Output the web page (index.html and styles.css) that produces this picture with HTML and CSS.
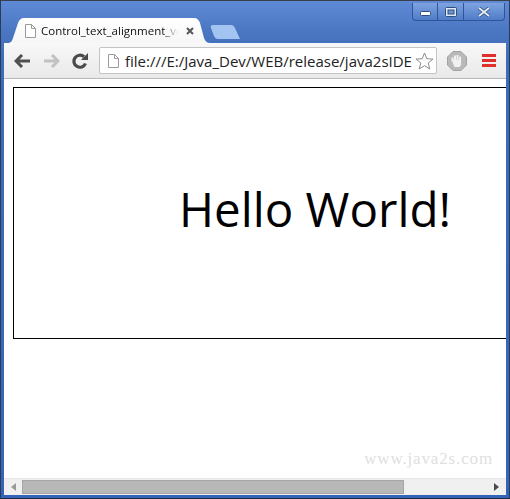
FILE: index.html
```html
<!DOCTYPE html>
<html lang="en">
<head>
    <meta charset="UTF-8">
    <title>Control_text_alignment_vertical</title>
    <link rel="stylesheet" href="styles.css">
</head>
<body>
    <div class="window">
        <div class="title-bar">
            <div class="tab">
                <svg class="page-icon" width="12" height="14" viewBox="0 0 12 14"><path d="M1.5 .5H7.5L11.5 4.5V13.5H1.5Z M7.5 .5V4.5H11.5" fill="#fff" stroke="#9a9a9a"/></svg>
                <span class="tab-title">Control_text_alignment_ve</span>
                <svg class="tab-close" width="8" height="8" viewBox="0 0 8 8"><path d="M1 1L7 7M7 1L1 7" stroke="#555" stroke-width="2"/></svg>
            </div>
            <div class="new-tab"></div>
            <div class="window-buttons">
                <div class="win-btn win-min"><svg width="11" height="5" viewBox="0 0 11 5"><rect x=".5" y=".5" width="10" height="4" rx="1" fill="#fff" stroke="#2f4f80"/></svg></div>
                <div class="win-btn win-max"><svg width="12" height="10" viewBox="0 0 12 10"><rect x=".5" y=".5" width="11" height="9" rx="1" fill="#dfe8f5" stroke="#2f4f80"/><rect x="3" y="3" width="6" height="4" fill="#6f94cf" stroke="#2f4f80"/></svg></div>
                <div class="win-btn win-close"><svg width="14" height="10" viewBox="0 0 14 10"><path d="M2 1L12 9M12 1L2 9" stroke="#2f4f80" stroke-width="3.4"/><path d="M2 1L12 9M12 1L2 9" stroke="#e8eef8" stroke-width="1.8"/></svg></div>
            </div>
        </div>
        <div class="toolbar">
            <svg class="nav-icon" width="17" height="14" viewBox="0 0 17 14"><path d="M8 1L2 7L8 13M2 7H16" fill="none" stroke="#505050" stroke-width="3"/></svg>
            <svg class="nav-icon" width="17" height="14" viewBox="0 0 17 14"><path d="M9 1L15 7L9 13M15 7H1" fill="none" stroke="#c2c2c2" stroke-width="3"/></svg>
            <svg class="nav-icon" width="16" height="16" viewBox="0 0 16 16"><path d="M13.500 10.500A6 6 0 1 1 12 3.800" fill="none" stroke="#4a4a4a" stroke-width="3.200"/><path d="M9 7H16V0Z" fill="#4a4a4a"/></svg>
            <div class="address-bar">
                <svg class="page-icon" width="12" height="14" viewBox="0 0 12 14"><path d="M1.5 .5H7.5L11.5 4.5V13.5H1.5Z M7.5 .5V4.5H11.5" fill="#fff" stroke="#9a9a9a"/></svg>
                <span class="url">file:///E:/Java_Dev/WEB/release/java2sIDE</span>
                <svg class="star" width="19" height="18" viewBox="0 0 19 18"><path d="M9.5 1L11.8 6.7L18 7.1L13.2 11L14.8 17L9.5 13.7L4.2 17L5.8 11L1 7.1L7.2 6.7Z" fill="#fff" stroke="#8c8c8c"/></svg>
            </div>
            <svg class="stop-icon" width="20" height="20" viewBox="0 0 20 20"><path d="M6 .5H14L19.5 6V14L14 19.5H6L.5 14V6Z" fill="#b9b9b9" stroke="#a2a2a2"/><path d="M5.5 10V6.5M8 9V4.5M10.5 9V4M13 9.500V5.500" fill="none" stroke="#f1f1f1" stroke-width="2"/><path d="M4.500 9H14V14L12.500 16H7.500Z" fill="#f1f1f1"/></svg>
            <div class="menu-icon"><span></span><span></span><span></span></div>
        </div>
        <div class="content">
            <div class="page">
                <div class="box">Hello World!</div>
            </div>
            <div class="watermark">www.java2s.com</div>
            <div class="scrollbar">
                <div class="arrow arrow-left"></div>
                <div class="track"><div class="thumb"></div></div>
                <div class="arrow arrow-right"></div>
            </div>
        </div>
    </div>
</body>
</html>
```

FILE: styles.css
```css
html, body {
    margin: 0;
    height: 100%;
    overflow: hidden;
    background-color: #1d2a44;
}

.window {
    box-sizing: border-box;
    width: 510px;
    height: 499px;
    padding: 2px 3px 3px 3px;
    display: flex;
    flex-direction: column;
    background: linear-gradient(to bottom, #5e8ad6 0, #4a76c2 30px, #3f6cb8 60px, #3464b8 100%);
    border-left: 1px solid #2b3a55;
    border-right: 1px solid #2b3a55;
    border-top: 1px solid #3a3f4a;
    border-bottom: 1px solid #1d2a44;
    font-family: "Open Sans", sans-serif;
}

.title-bar {
    height: 40px;
    display: flex;
    align-items: flex-end;
    position: relative;
    flex-shrink: 0;
}

.tab {
    width: 203px;
    height: 25px;
    margin-left: 3px;
    padding-left: 17px;
    box-sizing: border-box;
    display: flex;
    align-items: center;
    background: linear-gradient(to bottom, #ffffff, #f6f6f6);
    clip-path: path("M0 25C4 25 5 23 6 20L11 5C12 2 14 0 17 0H187C190 0 192 2 193 5L197 20C198 23 200 25 203 25Z");
}

.tab-title {
    width: 137px;
    margin-left: 5px;
    white-space: nowrap;
    font-size: 11.5px;
    color: #111;
    -webkit-mask-image: linear-gradient(to right, #000 122px, transparent 137px);
}

.tab-close {
    margin-left: 8px;
}

.new-tab {
    width: 30px;
    height: 14px;
    margin-bottom: 4px;
    background: #a3c4f0;
    clip-path: path("M3 0H21C23 0 24 1 25 3L30 14H8C6 14 5 13 4 11L1 3C0 1 1 0 3 0Z");
}

.window-buttons {
    position: absolute;
    top: 0;
    right: 1px;
    width: 93px;
    height: 18px;
    display: flex;
    box-sizing: border-box;
    border: 1px solid #2f5596;
    border-top: none;
    border-radius: 0 0 4px 4px;
    background: linear-gradient(to bottom, #7ea3e0, #4f7cc8);
}

.win-btn {
    display: flex;
    align-items: center;
    justify-content: center;
    border-right: 1px solid #2f5596;
}

.win-min {
    width: 25px;
    padding-top: 3px;
    box-sizing: border-box;
}

.win-max {
    width: 25px;
}

.win-close {
    flex: 1;
    border-right: none;
}

.toolbar {
    height: 36px;
    padding-left: 10px;
    display: flex;
    align-items: center;
    flex-shrink: 0;
    box-sizing: border-box;
    background: linear-gradient(to bottom, #f8f8f8, #e9e9e9);
    border-bottom: 1px solid #b9b9b9;
}

.nav-icon {
    margin-right: 12px;
}

.address-bar {
    width: 338px;
    height: 27px;
    margin-left: -1px;
    padding-left: 7px;
    box-sizing: border-box;
    display: flex;
    align-items: center;
    background-color: #fff;
    border: 1px solid #c4c4c4;
    border-radius: 2px;
}

.url {
    margin-left: 6px;
    white-space: nowrap;
    font-size: 15px;
    color: #222;
}

.star {
    margin-left: auto;
    margin-right: 2px;
}

.stop-icon {
    margin-left: 10px;
}

.menu-icon {
    width: 14px;
    margin-left: 15px;
    display: flex;
    flex-direction: column;
    gap: 2px;
}

.menu-icon span {
    height: 3px;
    background-color: #e0302c;
}

.content {
    flex: 1;
    min-height: 0;
    position: relative;
    display: flex;
    flex-direction: column;
    background-color: #fff;
}

.page {
    flex: 1;
    min-height: 0;
    overflow: hidden;
    padding: 8px 9px;
}

.box {
    width: 335px;
    height: 250px;
    line-height: 241px;
    padding-left: 165px;
    border: 1px solid #000;
    font-size: 47.5px;
    color: #000;
    white-space: nowrap;
}

.watermark {
    position: absolute;
    right: 13px;
    bottom: 26px;
    font-family: "Liberation Serif", serif;
    font-size: 17px;
    letter-spacing: 0.85px;
    color: #e0e0e0;
}

.scrollbar {
    height: 17px;
    display: flex;
    align-items: center;
    flex-shrink: 0;
    background-color: #f0f0f0;
    border-top: 1px solid #e6e6e6;
    box-sizing: border-box;
}

.arrow {
    width: 0;
    height: 0;
    border-top: 4px solid transparent;
    border-bottom: 4px solid transparent;
}

.arrow-left {
    margin-left: 7px;
    margin-right: 6px;
    border-right: 5px solid #9a9a9a;
}

.arrow-right {
    margin-left: 6px;
    margin-right: 7px;
    border-left: 5px solid #4a4a4a;
}

.track {
    flex: 1;
    height: 14px;
}

.thumb {
    width: 382px;
    height: 100%;
    box-sizing: border-box;
    background-color: #b8b8b8;
    border: 1px solid #a6a6a6;
}
```
